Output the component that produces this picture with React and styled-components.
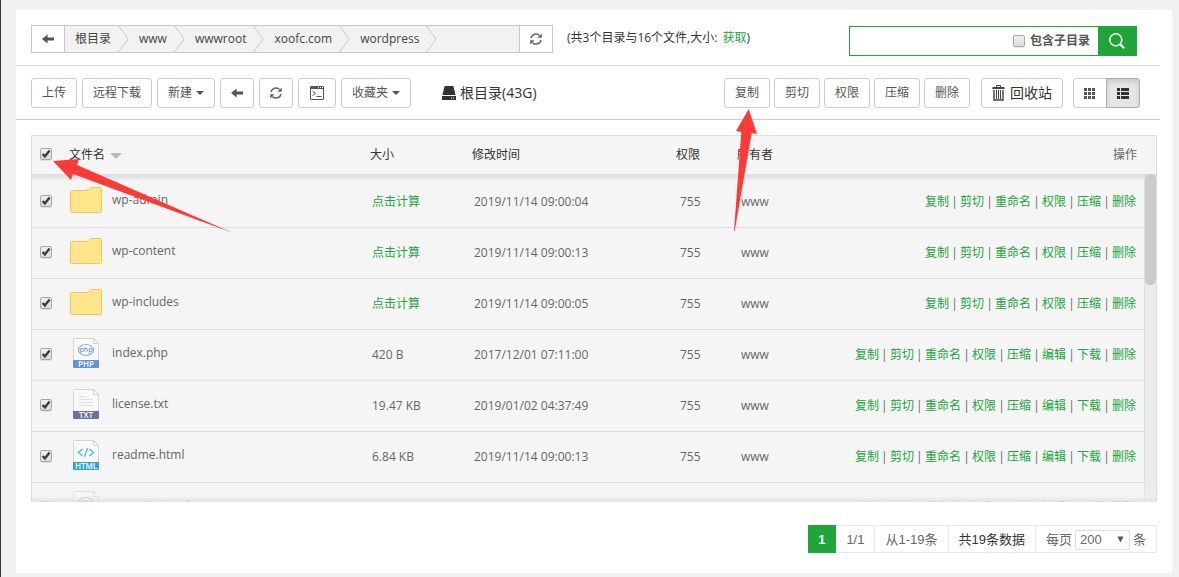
import React, { useState } from "react";
import styled, { createGlobalStyle, css } from "styled-components";

const GlobalStyle = createGlobalStyle`
  *, *::before, *::after { box-sizing: border-box; }
  body {
    margin: 0;
    background: #f1f1f1;
    color: #666;
    font-family: "Open Sans", "Noto Sans CJK SC", sans-serif;
    font-size: 12px;
    line-height: 18px;
  }
  button, input, select { font: inherit; color: inherit; margin: 0; }
  a { color: #20a53a; text-decoration: none; }
`;

const Page = styled.div`
  position: relative;
  min-width: 1120px;
  min-height: 100vh;
  padding: 10px 7px 4px 15px;
  border-left: 1px solid #2f3542;
`;

const Panel = styled.main`
  background: #fff;
  padding-bottom: 20px;
`;

const Bar = styled.div`
  display: flex;
  align-items: ${(p) => p.$align || "center"};
  margin-right: 12px;
  padding: ${(p) => p.$pad};
  border-bottom: 1px solid ${(p) => p.$line};
`;

const PathBox = styled.nav`
  display: flex;
  flex: 0 1 522px;
  height: 28px;
  border: 1px solid #c8c8c8;
  background: #f2f2f2;
`;

const PathButton = styled.button`
  display: flex;
  align-items: center;
  justify-content: center;
  width: 33px;
  padding: 0;
  border: 0 solid #c8c8c8;
  border-width: ${(p) => (p.$end ? "0 0 0 1px" : "0 1px 0 0")};
  background: #fff;
`;

const Crumbs = styled.ol`
  display: flex;
  flex: 1;
  margin: 0;
  padding: 0 0 0 10px;
  list-style: none;
`;

const Crumb = styled.li`
  display: flex;
  align-items: center;
  gap: 7px;
  margin-right: 10px;
  a { color: #444; }
`;

const Info = styled.p`
  margin: 4px 0 0 14px;
  color: #333;
  a { margin-left: 2px; }
`;

const Search = styled.form`
  display: flex;
  width: 288px;
  height: 30px;
  margin: 1px 23px 0 auto;
  border: 1px solid #20a53a;
`;

const SearchInput = styled.input`
  flex: 1;
  min-width: 0;
  padding: 0 8px;
  border: 0;
  outline: 0;
  background: transparent;
`;

const SearchLabel = styled.label`
  display: flex;
  align-items: center;
  gap: 5px;
  margin-right: 8px;
  color: #555;
  font-weight: 700;
`;

const SearchButton = styled.button`
  display: flex;
  align-items: center;
  justify-content: center;
  width: 38px;
  padding: 0;
  border: 0;
  background: #20a53a;
`;

const Group = styled.div`
  display: flex;
  align-items: center;
  gap: ${(p) => p.$gap || 0}px;
  margin-left: ${(p) => p.$left || 0};
`;

const ToolButton = styled.button`
  display: flex;
  align-items: center;
  justify-content: center;
  gap: 4px;
  height: 30px;
  min-width: 34px;
  padding: 0 10px;
  border: 1px solid #ccc;
  border-radius: 3px;
  background: #fff;
  color: #555;
  ${(p) => p.$large && css`
    font-size: 14px;
    color: #333;
  `}
`;

const ViewButton = styled.button`
  display: flex;
  align-items: center;
  justify-content: center;
  width: 34px;
  height: 30px;
  padding: 0;
  border: 1px solid #ccc;
  border-radius: 3px 0 0 3px;
  background: #fff;
  & + & {
    margin-left: -1px;
    border-radius: 0 3px 3px 0;
  }
  ${(p) => p.$active && css`
    border-color: #adadad;
    background: #e6e6e6;
    box-shadow: inset 0 3px 5px rgba(0, 0, 0, 0.125);
  `}
`;

const Disk = styled.div`
  display: flex;
  align-items: center;
  gap: 4px;
  margin-left: 31px;
  font-size: 14px;
  color: #333;
`;

const Files = styled.section`
  position: relative;
  margin: 15px 15px 0 15px;
  border: 1px solid #ddd;
  border-bottom: 0;
  background: #f5f5f5;
`;

const FilesTable = styled.table`
  width: 100%;
  table-layout: fixed;
  border-collapse: separate;
  border-spacing: 0;
`;

const HeadCell = styled.th`
  height: 38px;
  padding: 0 ${(p) => (p.$right ? 19 : 8)}px ${(p) => (p.$check ? 2 : 0)}px 8px;
  color: ${(p) => (p.$right ? "#666" : "#333")};
  font-weight: 400;
  text-align: ${(p) => (p.$right ? "right" : "left")};
  white-space: nowrap;
`;

const Sort = styled.span`
  display: inline-block;
  margin-left: 5px;
  border: 6px solid transparent;
  border-top-color: #bbb;
  border-bottom: 0;
  vertical-align: middle;
`;

const Scroller = styled.div`
  position: relative;
  display: flex;
  height: 328px;
  overflow: hidden;
  &::before, &::after {
    content: "";
    position: absolute;
    left: 0;
    right: 0;
    pointer-events: none;
  }
  &::before {
    top: 0;
    height: 7px;
    background: linear-gradient(#dedede 0, #e2e2e2 3px, rgba(235, 235, 235, 0) 7px);
  }
  &::after {
    bottom: 0;
    height: 18px;
    background: linear-gradient(rgba(245, 245, 245, 0.1), rgba(243, 243, 243, 0.5) 12px, rgba(222, 222, 222, 0.8));
  }
`;

const Rows = styled.div`
  flex: 1;
  padding-top: 3px;
  border-right: 1px solid #ddd;
`;

const Track = styled.div`
  width: 11px;
  background: #ebebeb;
`;

const Thumb = styled.div`
  position: relative;
  z-index: 1;
  height: 111px;
  border-radius: 6px;
  background: #cbcbcb;
`;

const Cell = styled.td`
  height: 51px;
  padding: 0 8px ${(p) => (p.$check ? 2 : 0)}px;
  border-bottom: 1px solid #ddd;
  text-align: ${(p) => (p.$right ? "right" : "left")};
  white-space: nowrap;
`;

const FileName = styled.div`
  display: flex;
  align-items: center;
  padding-bottom: 4px;
`;

const IconSlot = styled.span`
  display: flex;
  justify-content: center;
  width: 32px;
  margin-right: 10px;
`;

const Divider = styled.span`
  display: inline-block;
  width: 11px;
  text-align: center;
`;

const CheckBox = styled.span`
  position: relative;
  display: block;
  width: 12px;
  height: 12px;
  input {
    display: block;
    appearance: none;
    width: 12px;
    height: 12px;
    border: 1px solid #a6a6a6;
    border-radius: 2px;
    background: linear-gradient(#efefef, #dcdcdc);
    box-shadow: 0 1px 0 rgba(0, 0, 0, 0.08);
  }
  svg {
    position: absolute;
    left: 0;
    top: 0;
    pointer-events: none;
  }
`;

const Pager = styled.div`
  display: flex;
  justify-content: flex-end;
  margin: 23px 15px 0;
  font-family: "Liberation Sans", "Noto Sans CJK SC", sans-serif;
  font-size: 13px;
`;

const PagerItem = styled.span`
  display: flex;
  align-items: center;
  gap: 3px;
  height: 28px;
  padding: 2px 10px 0;
  border: 1px solid #e8e8e8;
  border-left-width: 0;
  color: ${(p) => (p.$dark ? "#333" : "#666")};
  ${(p) => p.$current && css`
    border-color: #20a53a;
    background: #20a53a;
    color: #fff;
    font-weight: 700;
  `}
`;

const SelectWrap = styled.span`
  position: relative;
  display: flex;
  select {
    appearance: none;
    width: 55px;
    height: 20px;
    padding: 0 4px;
    border: 1px solid #ddd;
    background: #fff;
    line-height: 18px;
  }
  svg {
    position: absolute;
    right: 6px;
    top: 6px;
    pointer-events: none;
  }
`;

const Pointer = styled.svg`
  position: absolute;
  top: ${(p) => p.$top}px;
  left: ${(p) => p.$left || "auto"};
  right: ${(p) => p.$right || "auto"};
  fill: #fc3a38;
  pointer-events: none;
`;

const Caret = styled.span`
  border: 4px solid transparent;
  border-top-color: #555;
  border-bottom: 0;
`;

const ArrowLeft = () => (
  <svg width="12" height="10" viewBox="0 0 12 10" fill="#555" aria-hidden="true">
    <path d="M0 5 5.6 0.4V3.6H12V6.4H5.6V9.6Z" />
  </svg>
);

const Refresh = () => (
  <svg width="12" height="12" viewBox="0 0 12 12" aria-hidden="true">
    <path d="M1 5.2A5 5 0 0 1 9.6 2.6M11 6.8A5 5 0 0 1 2.4 9.4" fill="none" stroke="#666" strokeWidth="1.5" />
    <path d="M11.8 0.4V4.8H7.4ZM0.2 11.6V7.2H4.6Z" fill="#666" />
  </svg>
);

const Terminal = () => (
  <svg width="16" height="14" viewBox="0 0 16 14" fill="none" stroke="#555" aria-hidden="true">
    <rect x="1.5" y="0.5" width="13" height="13" rx="0.5" />
    <path d="M1.5 2H14.5" strokeWidth="2" />
    <path d="M9 1.5H10M11 1.5H12M13 1.5H14" stroke="#fff" />
    <path d="M3.5 5 6.5 7.3 3.5 9.6M7.5 10.5H12.5" />
  </svg>
);

const DiskIcon = () => (
  <svg width="14" height="14" viewBox="0 0 14 14" fill="#333" aria-hidden="true">
    <path d="M2.6 0H11.4L13.6 9H0.4Z" />
    <path d="M0 10H14V14H0Z" />
    <path d="M9 12H10M11 12H12" stroke="#fff" />
  </svg>
);

const Trash = () => (
  <svg width="14" height="16" viewBox="0 0 14 16" fill="none" stroke="#444" aria-hidden="true">
    <path d="M4.5 2V0.5H8.5V2" />
    <path d="M0.5 3H12.5" strokeWidth="2" />
    <path d="M2 5V15H11V5" strokeWidth="1.4" />
    <path d="M4.5 5V14M6.5 5V14M8.5 5V14" />
  </svg>
);

const GridIcon = () => (
  <svg width="12" height="11" viewBox="0 0 12 11" fill="#555" aria-hidden="true">
    {[0, 4, 8].map((y) => [0, 4, 8].map((x) => (
      <rect key={`${x}-${y}`} x={x} y={y} width="3" height="3" />
    )))}
  </svg>
);

const ListIcon = () => (
  <svg width="12" height="11" viewBox="0 0 12 11" fill="#333" aria-hidden="true">
    {[0, 4, 8].map((y) => (
      <React.Fragment key={y}>
        <rect x="0" y={y} width="3" height="3" />
        <rect x="4" y={y} width="8" height="3" />
      </React.Fragment>
    ))}
  </svg>
);

const SearchIcon = () => (
  <svg width="16" height="16" viewBox="0 0 16 16" fill="none" stroke="#fff" aria-hidden="true">
    <circle cx="6.8" cy="6.8" r="6" strokeWidth="1.5" />
    <path d="M11.2 11.2 15.2 15.2" strokeWidth="2" />
  </svg>
);

const Chevron = () => (
  <svg width="11" height="26" viewBox="0 0 11 26" fill="none" stroke="#c8c8d4" aria-hidden="true">
    <path d="M0.5 0 10.2 13 0.5 26" />
  </svg>
);

const Folder = () => (
  <svg width="32" height="26" viewBox="0 0 32 26" aria-hidden="true">
    <path
      d="M1.5 3.5H17.5Q18.5 3.5 19 2.5L20 1.2Q20.4 0.5 21.2 0.5H30.5Q31.5 0.5 31.5 1.5V24.5Q31.5 25.5 30.5 25.5H1.5Q0.5 25.5 0.5 24.5V4.5Q0.5 3.5 1.5 3.5Z"
      fill="#ffe68c"
      stroke="#f0c85a"
    />
  </svg>
);

const fileKinds = {
  php: { color: "#5f93d8", label: "PHP" },
  txt: { color: "#6a7496", label: "TXT" },
  html: { color: "#2fa3dc", label: "HTML" },
};

const FileIcon = ({ kind }) => {
  const { color, label } = fileKinds[kind];
  return (
    <svg width="26" height="30" viewBox="0 0 26 30" aria-hidden="true">
      <path d="M1.5 0.5H20.5L25.5 5.5V28.5H0.5V1.5Q0.5 0.5 1.5 0.5Z" fill="#f9f9f9" stroke="#d4d4d4" />
      <path d="M20.5 0.5V5.5H25.5" fill="none" stroke="#d4d4d4" />
      {kind === "php" && (
        <>
          <ellipse cx="13" cy="12" rx="7.5" ry="5.5" fill="none" stroke="#82abe2" strokeWidth="1.2" />
          <text x="13" y="14" textAnchor="middle" fontSize="7" fontWeight="600" fill="#6f9fe0">php</text>
        </>
      )}
      {kind === "txt" && <path d="M6 7.5H13M6 10.5H20M6 13.5H20M6 16.5H20" stroke="#dce1e3" />}
      {kind === "html" && (
        <path d="M9.5 9 5.5 12.5 9.5 16M16.5 9 20.5 12.5 16.5 16M14.5 8 11.5 17" fill="none" stroke="#4db1e0" strokeWidth="1.2" />
      )}
      <path d="M0 22H26V29Q26 30 25 30H1Q0 30 0 29Z" fill={color} />
      <text x="13" y="29" textAnchor="middle" fontSize="8" fontWeight="600" fill="#fff">{label}</text>
    </svg>
  );
};

const Check = ({ label, id, initial = true }) => {
  const [on, setOn] = useState(initial);
  return (
    <CheckBox>
      <input id={id} type="checkbox" aria-label={label} checked={on} onChange={() => setOn(!on)} />
      {on && (
        <svg width="12" height="12" viewBox="0 0 12 12" fill="none" stroke="#3c3c3c" strokeWidth="2.4" aria-hidden="true">
          <path d="M2.6 6 4.9 8.4 9.6 2.6" />
        </svg>
      )}
    </CheckBox>
  );
};

const crumbs = ["根目录", "www", "wwwroot", "xoofc.com", "wordpress"];
const folderActions = ["复制", "剪切", "重命名", "权限", "压缩", "删除"];
const fileActions = ["复制", "剪切", "重命名", "权限", "压缩", "编辑", "下载", "删除"];

const files = [
  { name: "wp-admin", time: "2019/11/14 09:00:04" },
  { name: "wp-content", time: "2019/11/14 09:00:13" },
  { name: "wp-includes", time: "2019/11/14 09:00:05" },
  { name: "index.php", kind: "php", size: "420 B", time: "2017/12/01 07:11:00" },
  { name: "license.txt", kind: "txt", size: "19.47 KB", time: "2019/01/02 04:37:49" },
  { name: "readme.html", kind: "html", size: "6.84 KB", time: "2019/11/14 09:00:13" },
  { name: "wp-activate.php", kind: "php", size: "6.76 KB", time: "2019/11/14 09:00:13" },
];

const Columns = ({ widths }) => (
  <colgroup>
    {widths.map((w, i) => <col key={i} width={w} />)}
    <col />
  </colgroup>
);

const Actions = ({ items }) => items.map((item, i) => (
  <React.Fragment key={item}>
    {i > 0 && <Divider>|</Divider>}
    <a href="#">{item}</a>
  </React.Fragment>
));

export default function App() {
  return (
    <Page>
      <GlobalStyle />
      <Panel>
        <Bar $align="flex-start" $pad="15px 0 9px 15px" $line="#ddd">
          <PathBox aria-label="路径">
            <PathButton type="button" aria-label="返回"><ArrowLeft /></PathButton>
            <Crumbs>
              {crumbs.map((c) => (
                <Crumb key={c}><a href="#">{c}</a><Chevron /></Crumb>
              ))}
            </Crumbs>
            <PathButton type="button" $end aria-label="刷新"><Refresh /></PathButton>
          </PathBox>
          <Info>(共3个目录与16个文件,大小: <a href="#">获取</a>)</Info>
          <Search onSubmit={(e) => e.preventDefault()}>
            <SearchInput type="text" aria-label="搜索" />
            <SearchLabel htmlFor="sub"><Check id="sub" label="包含子目录" initial={false} />包含子目录</SearchLabel>
            <SearchButton type="submit" aria-label="搜索"><SearchIcon /></SearchButton>
          </Search>
        </Bar>
        <Bar $pad="12px 20px 11px 15px" $line="#ccc">
          <Group $gap={5}>
            <ToolButton>上传</ToolButton>
            <ToolButton>远程下载</ToolButton>
            <ToolButton>新建<Caret /></ToolButton>
            <ToolButton aria-label="返回"><ArrowLeft /></ToolButton>
            <ToolButton aria-label="刷新"><Refresh /></ToolButton>
            <ToolButton aria-label="终端"><Terminal /></ToolButton>
            <ToolButton>收藏夹<Caret /></ToolButton>
          </Group>
          <Disk><DiskIcon />根目录(43G)</Disk>
          <Group $gap={4} $left="auto">
            {["复制", "剪切", "权限", "压缩", "删除"].map((t) => <ToolButton key={t}>{t}</ToolButton>)}
          </Group>
          <Group $left="11px"><ToolButton $large><Trash />回收站</ToolButton></Group>
          <Group $left="10px">
            <ViewButton aria-label="图标视图"><GridIcon /></ViewButton>
            <ViewButton $active aria-label="列表视图"><ListIcon /></ViewButton>
          </Group>
        </Bar>
        <Files>
          <FilesTable>
            <Columns widths={[29, 301, 102, 204, 61]} />
            <thead>
              <tr>
                <HeadCell $check><Check label="全选" /></HeadCell>
                <HeadCell>文件名<Sort /></HeadCell>
                <HeadCell>大小</HeadCell>
                <HeadCell>修改时间</HeadCell>
                <HeadCell>权限</HeadCell>
                <HeadCell>所有者</HeadCell>
                <HeadCell $right>操作</HeadCell>
              </tr>
            </thead>
          </FilesTable>
          <Scroller>
            <Rows>
              <FilesTable>
                <Columns widths={[30, 302, 102, 206, 61, 100]} />
                <tbody>
                  {files.map((f) => (
                    <tr key={f.name}>
                      <Cell $check><Check label={f.name} /></Cell>
                      <Cell>
                        <FileName>
                          <IconSlot>{f.kind ? <FileIcon kind={f.kind} /> : <Folder />}</IconSlot>
                          {f.name}
                        </FileName>
                      </Cell>
                      <Cell>{f.size || <a href="#">点击计算</a>}</Cell>
                      <Cell>{f.time}</Cell>
                      <Cell>755</Cell>
                      <Cell>www</Cell>
                      <Cell $right><Actions items={f.kind ? fileActions : folderActions} /></Cell>
                    </tr>
                  ))}
                </tbody>
              </FilesTable>
            </Rows>
            <Track><Thumb /></Track>
          </Scroller>
        </Files>
        <Pager>
          <PagerItem $current>1</PagerItem>
          <PagerItem>1/1</PagerItem>
          <PagerItem>从1-19条</PagerItem>
          <PagerItem $dark>共19条数据</PagerItem>
          <PagerItem>
            <label htmlFor="per-page">每页</label>
            <SelectWrap>
              <select id="per-page" defaultValue="200">
                <option>100</option>
                <option>200</option>
              </select>
              <svg width="7" height="7" viewBox="0 0 7 7" fill="#555" aria-hidden="true"><path d="M0.5 0.5H6.5L3.5 6.5Z" /></svg>
            </SelectWrap>
            条
          </PagerItem>
        </Pager>
      </Panel>
      <Pointer $top={159} $left="52px" width="181" height="75" viewBox="0 0 181 75" aria-hidden="true">
        <path d="M0 2 26 0 24 6 180 74 20 15 18 21Z" />
      </Pointer>
      <Pointer $top={109} $right="421px" width="24" height="122" viewBox="0 0 24 122" aria-hidden="true">
        <path d="M14.7 0 23 25 17.7 24 0.7 122H0L7.3 23 2 22Z" />
      </Pointer>
    </Page>
  );
}
